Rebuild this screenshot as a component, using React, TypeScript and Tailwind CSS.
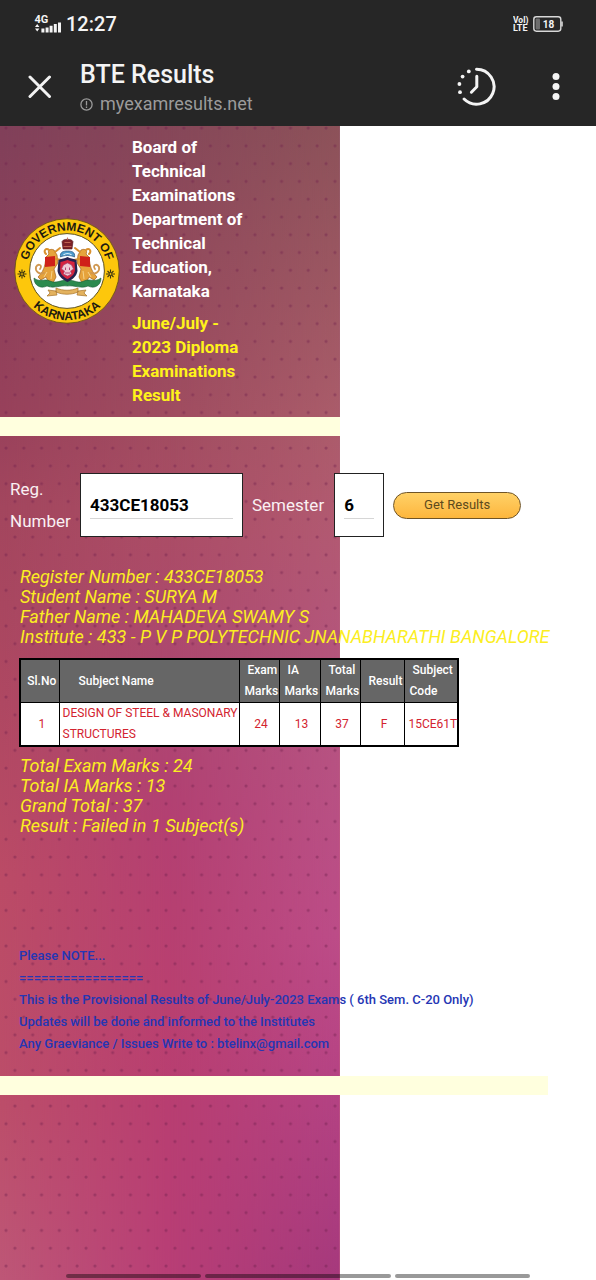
import React from "react";

function StatusBar() {
  return (
    <div className="flex h-12 items-center pl-[34px] pr-[33px] text-[#f4f4f4]">
      <svg width="28" height="20" viewBox="0 0 28 20" aria-hidden="true">
        <text x="0.5" y="8.8" fontSize="11" fontWeight="700" fontFamily="Roboto, sans-serif" fill="currentColor">4G</text>
        <path d="M1 13 L3.2 10 L5.4 13 Z M1 14.6 L3.2 17.6 L5.4 14.6 Z" fill="currentColor" />
        <path d="M7.4 14.6h3V18.4h-3z M11.6 13.4h3v5h-3z M15.6 11.8h3v6.6h-3z M19.8 10h3v8.400h-3z M24 8.400h3v10h-3z" fill="currentColor" />
      </svg>
      <span className="ml-1 text-[20px] font-medium leading-6">12:27</span>
      <svg className="ml-auto" width="50" height="18" viewBox="0 0 50 18" aria-hidden="true">
        <text x="0" y="8.2" fontSize="8.5" fontWeight="700" fontFamily="Roboto, sans-serif" fill="currentColor">Vol)</text>
        <text x="0" y="16.2" fontSize="9" fontWeight="700" fontFamily="Roboto, sans-serif" fill="currentColor">LTE</text>
        <rect x="20.8" y="1.8" width="27" height="14.4" rx="2.6" fill="none" stroke="#d8d8d8" strokeWidth="1.4" />
        <rect x="22.6" y="3.6" width="4.4" height="10.8" rx="1" fill="#6d6d6d" />
        <path d="M49 6.6v4.8" stroke="#d8d8d8" strokeWidth="1.6" />
        <text x="35.4" y="12.6" fontSize="10" fontWeight="700" textAnchor="middle" fontFamily="Roboto, sans-serif" fill="currentColor">18</text>
      </svg>
    </div>
  );
}

function Toolbar() {
  return (
    <div className="flex h-[78px] items-center pl-7 pr-[30px]">
      <button type="button" aria-label="Close" className="text-[#f2f2f2]">
        <svg width="24" height="24" viewBox="0 0 24 24" fill="none" stroke="currentColor" strokeWidth="3" strokeLinecap="round">
          <path d="M2 2 L21.5 21.5 M21.5 2 L2 21.5" />
        </svg>
      </button>
      <div className="ml-7 pt-[6px]">
        <h1 className="text-[25px] font-medium leading-7 text-[#f4f4f4]">BTE Results</h1>
        <div className="flex items-center gap-[7px] text-[#9b9b9b]">
          <svg width="13" height="13" viewBox="0 0 13 13" fill="none" stroke="currentColor" strokeWidth="1.3" aria-hidden="true">
            <circle cx="6.5" cy="6.5" r="5.6" />
            <path d="M6.5 3v4.4 M6.5 8.6v1.4" />
          </svg>
          <span className="text-[18px] leading-[30px]">myexamresults.net</span>
        </div>
      </div>
      <button type="button" aria-label="Speed dial" className="ml-auto text-[#f4f4f4]">
        <svg width="40" height="40" viewBox="0 0 40 40" fill="none" stroke="currentColor" strokeWidth="3" strokeLinecap="round" strokeLinejoin="round">
          <path d="M20.5 2.2 A17.5 17.5 0 1 1 8.1 32" />
          <path d="M20.8 9.2 V19.8 L15.4 25.2" />
          <g fill="currentColor" stroke="none">
            <circle cx="12.8" cy="4.4" r="1.9" />
            <circle cx="6.6" cy="9.6" r="1.9" />
            <circle cx="3.4" cy="17" r="1.9" />
            <circle cx="4" cy="25.2" r="1.9" />
          </g>
        </svg>
      </button>
      <button type="button" aria-label="More options" className="ml-[50px] text-[#f4f4f4]">
        <svg width="20" height="28" viewBox="0 0 20 28" fill="currentColor">
          <circle cx="10" cy="3.6" r="3.5" />
          <circle cx="10" cy="13.6" r="3.5" />
          <circle cx="10" cy="23.6" r="3.5" />
        </svg>
      </button>
    </div>
  );
}

type Stop = [number, string];

const leftStops: Stop[] = [[0, "#81405a"], [25, "#98415b"], [33, "#a3465e"], [50, "#af4862"], [65, "#bb4b66"], [85, "#bc4e6a"], [100, "#be5777"]];
const middleStops: Stop[] = [[0, "#864759"], [25, "#a04c60"], [35, "#ab4d66"], [50, "#ad4672"], [60, "#b34072"], [75, "#b94070"], [85, "#b83e71"], [100, "#b83e76"]];
const rightStops: Stop[] = [[0, "#8c5259"], [25, "#aa5c6a"], [33, "#b15a70"], [50, "#b55480"], [70, "#bc4c88"], [80, "#b74585"], [100, "#a5397c"]];

function Stops({ items }: { items: Stop[] }) {
  return (
    <>
      {items.map(([at, color]) => (
        <stop key={at} offset={`${at}%`} stopColor={color} />
      ))}
    </>
  );
}

function Backdrop() {
  return (
    <svg className="absolute left-0 top-0 h-full w-[57%]" aria-hidden="true">
      <defs>
        <linearGradient id="bg-left" x1="0" y1="0" x2="0" y2="1"><Stops items={leftStops} /></linearGradient>
        <linearGradient id="bg-middle" x1="0" y1="0" x2="0" y2="1"><Stops items={middleStops} /></linearGradient>
        <linearGradient id="bg-right" x1="0" y1="0" x2="0" y2="1"><Stops items={rightStops} /></linearGradient>
        <linearGradient id="fade-middle"><stop offset="0" stopColor="#fff" stopOpacity="0" /><stop offset="50%" stopColor="#fff" /></linearGradient>
        <linearGradient id="fade-right"><stop offset="50%" stopColor="#fff" stopOpacity="0" /><stop offset="100%" stopColor="#fff" /></linearGradient>
        <mask id="mask-middle"><rect width="100%" height="100%" fill="url(#fade-middle)" /></mask>
        <mask id="mask-right"><rect width="100%" height="100%" fill="url(#fade-right)" /></mask>
        <pattern id="dots" width="17.78" height="35.56" patternUnits="userSpaceOnUse">
          <g fill="#6e1f4c" fillOpacity="0.4">
            <circle cx="6" cy="2" r="1.6" />
            <circle cx="14.9" cy="19.8" r="1.6" />
          </g>
        </pattern>
      </defs>
      <rect width="100%" height="100%" fill="url(#bg-left)" />
      <rect width="100%" height="100%" fill="url(#bg-middle)" mask="url(#mask-middle)" />
      <rect width="100%" height="100%" fill="url(#bg-right)" mask="url(#mask-right)" />
      <rect width="100%" height="100%" fill="url(#dots)" />
    </svg>
  );
}

function Star({ x }: { x: number }) {
  return (
    <g transform={`translate(${x} 57)`} stroke="#3b3410" strokeWidth="1.1">
      <path d="M-4.500 0H4.500 M0 -4.500V4.500 M-3 -3L3 3 M3 -3L-3 3" />
      <circle r="1.2" fill="#fdc70c" strokeWidth="0.5" />
    </g>
  );
}

function Lion() {
  return (
    <g>
      <g transform="translate(-4 0)">
        <path d="M44 33 C40 31 37 34 39 37 L36 40 L35 47 C34 53 31 57 28 60 L31 63 L36 60 L38 64 L43 66 L46 60 L44 52 L48 46 L47 38 Z" fill="#e6a33c" stroke="#a4611c" strokeWidth="0.7" />
        <path d="M35 40 L45 39 L45 49 L35 50 Z" fill="#cf2019" />
        <path d="M36 37 C33 34 36 30 39 33 M45 35 L50 31 M46 42 L51 43" fill="none" stroke="#d9912f" strokeWidth="2" strokeLinecap="round" />
        <path d="M37 55 L34 60 M42 54 L41 62" stroke="#f7d38a" strokeWidth="1" />
      </g>
      <path d="M30 56 C25 58 21 54 22 50 C24 46 29 48 26 52" fill="none" stroke="#cf9750" strokeWidth="1.8" strokeLinecap="round" />
    </g>
  );
}

function Emblem() {
  return (
    <svg className="shrink-0" width="106" height="108" viewBox="0 0 106 108" role="img" aria-label="Government of Karnataka">
      <defs>
        <path id="arc-top" d="M12.5 54 A40.5 40.5 0 0 1 93.5 54" />
        <path id="arc-bottom" d="M3.8 54 A49.2 49.2 0 0 0 102.2 54" />
      </defs>
      <circle cx="53" cy="54" r="52.2" fill="#fdc70c" stroke="#5d4a14" strokeWidth="0.8" />
      <circle cx="53" cy="54" r="37.4" fill="#fff" stroke="#5e5220" strokeWidth="1" />
      <g fontFamily="Liberation Sans, sans-serif" fontWeight="700" fontSize="12" fill="#1d1a10" textAnchor="middle">
        <text><textPath href="#arc-top" startOffset="50%">GOVERNMENT OF</textPath></text>
        <text><textPath href="#arc-bottom" startOffset="50%">KARNATAKA</textPath></text>
      </g>
      <Star x={8} />
      <Star x={96.5} />
      <Lion />
      <g transform="translate(107 0) scale(-1 1)"><Lion /></g>
      <path d="M20 61 C26 66 30 61 36 64 C42 67 46 63 53.500 63 C61 63 64 67 70 64 C76 61 80 66 87 61 C87 69 80 72 74 69 C67 72 60 68 53.500 69 C46 68 40 72 33 69 C27 72 20 69 20 61 Z" fill="#2c8a4e" stroke="#1a5d35" strokeWidth="0.6" />
      <path d="M42 71 C49 74 57 74 64 71 L64 75 C57 78 49 78 42 75 Z M42 74 L34 73 L36 76 L33 79 L43 78 Z M64 74 L72 73 L70 76 L73 79 L63 78 Z" fill="#e3b25e" stroke="#a8742a" strokeWidth="0.7" />
      <g transform="translate(0.5 1)">
        <path d="M44 42 C48 40 50 41 53 39 C56 41 58 40 62 42 L63 53 C62 59 57 62 53 64 C49 62 44 59 43 53 Z" fill="#26224f" />
        <path d="M46 44 C49 43 51 43 53 42 C55 43 57 43 60 44 L60.500 52 C60 57 56 59.500 53 61 C50 59.500 46 57 45.500 52 Z" fill="#d5243f" />
        <path d="M49 47 L53 45 L57 47 L59 51 L56 53 L57 56 L53 58 L49 56 L50 53 L47 51 Z" fill="#f0cbd5" stroke="#9a4a78" strokeWidth="0.6" />
        <path d="M51 49.500V52 M55 49.500V52 M50.500 55H55.500" stroke="#a8346a" strokeWidth="0.9" />
        <path d="M46 39 C45 34 49 33 53 33 C57 33 61 34 60 39 C56 37 50 37 46 39 Z" fill="#4d9ccc" stroke="#27517e" strokeWidth="0.7" />
        <path d="M49 37 C51 35 55 35 57 37" fill="none" stroke="#d6eefa" strokeWidth="1.200" />
        <path d="M48.500 31 L47.500 23.500 C49 20.500 57 20.500 58.500 23.500 L57.500 31 Z" fill="#7c2026" stroke="#4e1518" strokeWidth="0.6" />
        <path d="M49 28.500H57 M50 24.500H56 M53 19.500V22" stroke="#c56a52" strokeWidth="0.9" />
      </g>
    </svg>
  );
}

function ResultHeader() {
  return (
    <header className="flex items-center pb-[10px] pl-[14px] pt-[9px]">
      <Emblem />
      <div className="ml-3 w-[120px] text-[17px] font-bold leading-6">
        <p className="text-white">Board of Technical Examinations Department of Technical Education, Karnataka</p>
        <p className="mt-2 text-[#fff31a]">June/July - 2023 Diploma Examinations Result</p>
      </div>
    </header>
  );
}

function SearchForm() {
  return (
    <form className="flex items-center px-[10px] pt-[37px]" onSubmit={(e) => e.preventDefault()}>
      <label htmlFor="reg" className="w-[70px] text-[17px] leading-8 text-[#faf0f3]">Reg. Number</label>
      <div className="flex h-16 items-center border border-[#222] bg-white px-[9px]">
        <input
          id="reg"
          defaultValue="433CE18053"
          className="h-7 w-[143px] border-b border-[#d6d6d6] bg-white text-[17px] font-bold text-black outline-none"
        />
      </div>
      <label htmlFor="sem" className="mx-[9px] text-[17px] leading-8 text-[#faf0f3]">Semester</label>
      <div className="ml-px flex h-16 items-center border border-[#222] bg-white px-[9px]">
        <input
          id="sem"
          defaultValue="6"
          className="h-7 w-[30px] border-b border-[#d6d6d6] bg-white text-[17px] font-bold text-black outline-none"
        />
      </div>
      <button
        type="submit"
        className="ml-[9px] h-[27px] w-32 rounded-full border border-[#6f5426] bg-linear-to-b from-[#ffd166] to-[#fdb63c] text-[13px] leading-5 text-[#5d4a1c]"
      >
        Get Results
      </button>
    </form>
  );
}

const heading = "border border-black pl-[5px] text-left font-medium";
const cell = "border border-black text-center";

function MarksTable() {
  return (
    <table className="-ml-px mb-[9px] mt-[11px] table-fixed border-collapse border-2 border-black text-[12px] leading-[21px]">
      <colgroup>
        <col className="w-[39px]" />
        <col className="w-[180px]" />
        <col className="w-10" />
        <col className="w-[41px]" />
        <col className="w-10" />
        <col className="w-11" />
        <col className="w-[52px]" />
      </colgroup>
      <thead className="bg-[#666] text-white">
        <tr>
          <th className="border border-black pl-1 font-medium">Sl.No</th>
          <th className="border border-black pl-[19px] text-left font-medium">Subject Name</th>
          <th className={heading}>&nbsp;Exam Marks</th>
          <th className={heading}>&nbsp;IA<br />Marks</th>
          <th className={heading}>&nbsp;Total Marks</th>
          <th className="border border-black pl-2 text-left font-medium">Result</th>
          <th className={heading}>&nbsp;Subject Code</th>
        </tr>
      </thead>
      <tbody className="bg-white text-[#d3232f]">
        <tr>
          <td className="border border-black pl-1 text-center">1</td>
          <td className="whitespace-nowrap border border-black pl-[3px] text-left">DESIGN OF STEEL &amp; MASONARY<br />STRUCTURES</td>
          <td className="border border-black pl-1 text-center">24</td>
          <td className="border border-black pl-1 text-center">13</td>
          <td className="border border-black pl-1 text-center">37</td>
          <td className="border border-black pl-1 text-center">F</td>
          <td className="border border-black pl-1 text-left">15CE61T</td>
        </tr>
      </tbody>
    </table>
  );
}

export default function App() {
  return (
    <div className="relative flex min-h-screen flex-col overflow-x-hidden bg-white font-[Roboto,sans-serif]">
      <div className="bg-[#262626]">
        <StatusBar />
        <Toolbar />
      </div>
      <div className="relative grow">
        <Backdrop />
        <main className="relative">
          <ResultHeader />
          <div className="h-[19px] w-[57%] bg-[#ffffde]" />
          <SearchForm />
          <section className="mt-[30px] px-5">
            <div className="whitespace-nowrap text-[18px] italic leading-5 text-[#fbee22]">
              <p>Register Number : 433CE18053</p>
              <p>Student Name : SURYA M</p>
              <p>Father Name : MAHADEVA SWAMY S</p>
              <p>Institute : 433 - P V P POLYTECHNIC JNANABHARATHI BANGALORE</p>
            </div>
            <MarksTable />
            <div className="text-[18px] italic leading-5 text-[#fbee22]">
              <p>Total Exam Marks : 24</p>
              <p>Total IA Marks : 13</p>
              <p>Grand Total : 37</p>
              <p>Result : Failed in 1 Subject(s)</p>
            </div>
          </section>
          <section className="mb-[21px] mt-[109px] whitespace-nowrap px-[19px] text-[13px] font-medium leading-[22px] text-[#2536b4]">
            <p>Please NOTE...</p>
            <p>=================</p>
            <p>This is the Provisional Results of June/July-2023 Exams ( 6th Sem. C-20 Only)</p>
            <p>Updates will be done and informed to the Institutes</p>
            <p>Any Graeviance / Issues Write to : btelinx@gmail.com</p>
          </section>
          <div className="h-[19px] w-[92%] bg-[#ffffde]" />
        </main>
      </div>
      <div className="absolute inset-x-0 bottom-[2px] flex gap-1 px-[66px]">
        <div className="h-1 w-[29%] rounded-full bg-black/40" />
        <div className="h-1 grow rounded-full bg-black/40" />
        <div className="h-1 w-[29%] rounded-full bg-black/40" />
      </div>
    </div>
  );
}
